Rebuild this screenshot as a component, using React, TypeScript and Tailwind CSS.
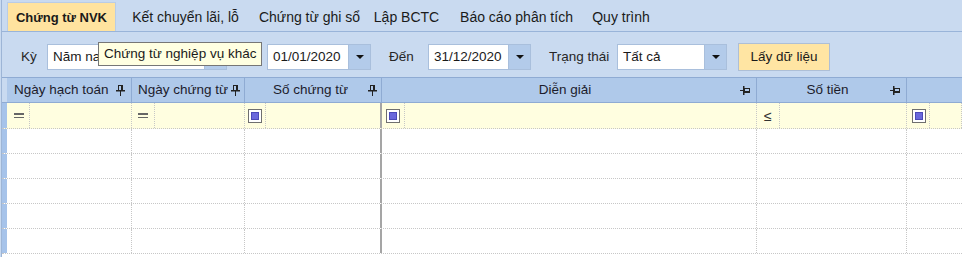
import React from 'react';

const tabs = [
  { label: 'Chứng từ NVK', w: 'w-[109px]', active: true },
  { label: 'Kết chuyển lãi, lỗ', w: 'w-[139px]' },
  { label: 'Chứng từ ghi sổ', w: 'w-[109px]' },
  { label: 'Lập BCTC', w: 'w-[85px]' },
  { label: 'Báo cáo phân tích', w: 'w-[135px]' },
  { label: 'Quy trình', w: 'w-[74px]' },
];

const cols = 'grid grid-cols-[5px_125px_113px_137px_375px_150px_1fr]';

function PinDown() {
  return (
    <svg width="9" height="11" viewBox="0 0 9 11" className="shrink-0">
      <rect x="2.5" y="0.5" width="4" height="5" fill="none" stroke="#222" />
      <rect x="5" y="0" width="2" height="6" fill="#222" />
      <rect x="0" y="5" width="9" height="1.5" fill="#222" />
      <rect x="4" y="6" width="1" height="5" fill="#222" />
    </svg>
  );
}

function PinSide() {
  return (
    <svg width="11" height="9" viewBox="0 0 11 9" className="shrink-0">
      <rect x="0" y="4" width="3" height="1" fill="#222" />
      <rect x="3" y="0" width="1.5" height="9" fill="#222" />
      <rect x="4.5" y="2.5" width="5" height="4" fill="none" stroke="#222" />
      <rect x="4" y="5" width="6" height="2" fill="#222" />
    </svg>
  );
}

function Drop({ w, text }: { w: string; text: string }) {
  return (
    <div className={`${w} h-[26px] flex border border-[#a9bfdc] bg-white`}>
      <div className="flex-1 flex items-center pl-[5px] text-[13.5px] text-[#1a1a1a] overflow-hidden whitespace-nowrap">
        {text}
      </div>
      <div className="w-[22px] bg-[#b3cbea] border-l border-[#a9bfdc] flex items-center justify-center">
        <svg width="8" height="4" viewBox="0 0 8 4">
          <path d="M0 0h8L4 4z" fill="#111" />
        </svg>
      </div>
    </div>
  );
}

function CheckIcon() {
  return (
    <div className="w-[14px] h-[14px] border border-[#6f6f6f] bg-white p-[2px]">
      <div className="w-full h-full bg-[#6a68dc] border border-[#4b49b8]" />
    </div>
  );
}

function EqIcon() {
  return (
    <div className="w-[10px] flex flex-col gap-[2px]">
      <div className="h-[1.5px] bg-[#666]" />
      <div className="h-[1.5px] bg-[#666]" />
    </div>
  );
}

function FilterCell({ icon, left = 'pl-[6px]' }: { icon: React.ReactNode; left?: string }) {
  return (
    <div className="flex h-full border-r border-dotted border-[#c7c7c7]">
      <div className={`w-[23px] ${left} flex items-center border-r border-dotted border-[#c7c7c7]`}>{icon}</div>
      <div className="flex-1" />
    </div>
  );
}

export default function App() {
  const rows = [0, 1, 2, 3, 4];
  return (
    <div className="w-[962px] h-[257px] overflow-hidden bg-[#c9daf0] font-['Liberation_Sans',Arial,sans-serif] text-[13.5px] text-[#1a1a1a] relative">
      <div className="ml-[1px] h-full border-l border-[#9db5d6] flex flex-col">
        {/* tab strip */}
        <div className="h-[32px] shrink-0 flex items-end border-b border-[#99b4d9] pl-[5px] text-[14px]">
          {tabs.map((t) => (
            <div
              key={t.label}
              className={`${t.w} h-[29px] pt-[1px] flex items-center justify-center whitespace-nowrap ${
                t.active ? 'bg-[#ffe39f] font-bold text-[13px] border-l border-t border-r border-[#b9cce6]' : ''
              }`}
            >
              {t.label}
            </div>
          ))}
        </div>

        {/* filter bar */}
        <div className="h-[28px] mt-[11px] shrink-0 flex items-center pl-[19px] text-[#262626]">
          <div className="w-[26px]">Kỳ</div>
          <Drop w="w-[180px]" text="Năm nay" />
          <div className="ml-[40px]">
            <Drop w="w-[104px]" text="01/01/2020" />
          </div>
          <div className="ml-[18px] w-[39px]">Đến</div>
          <Drop w="w-[103px]" text="31/12/2020" />
          <div className="ml-[18px] w-[68px] whitespace-nowrap">Trạng thái</div>
          <Drop w="w-[110px]" text="Tất cả" />
          <button className="ml-[11px] w-[92px] h-[28px] bg-[#ffe5a3] border border-[#aebfd6] text-[13.5px] text-[#1a1a1a]">
            Lấy dữ liệu
          </button>
        </div>

        {/* grid */}
        <div className="mt-[6px] flex-1 border-t border-[#8fabd3] bg-white">
          <div className={`${cols} h-[25px] bg-[#afc9ea] border-b border-[#8fabd3] text-[#1c1c2c]`}>
            <div className="bg-[#c9daf0]" />
            <div className="flex items-center justify-between pl-[7px] pr-[6px] border-r border-[#8fabd3]">
              <span>Ngày hạch toán</span>
              <PinDown />
            </div>
            <div className="flex items-center justify-between pl-[6px] pr-[4px] border-r border-[#8fabd3]">
              <span>Ngày chứng từ</span>
              <PinDown />
            </div>
            <div className="flex items-center pl-[8px] pr-[4px] border-r border-[#8fabd3]">
              <span className="flex-1 text-center">Số chứng từ</span>
              <PinDown />
            </div>
            <div className="flex items-center pl-[8px] pr-[5px] border-r border-[#8fabd3]">
              <span className="flex-1 text-center">Diễn giải</span>
              <PinSide />
            </div>
            <div className="flex items-center pl-[8px] pr-[5px] border-r border-[#8fabd3]">
              <span className="flex-1 text-center">Số tiền</span>
              <PinSide />
            </div>
            <div />
          </div>

          <div className={`${cols} h-[26px] bg-[#fffee0] border-b border-dotted border-[#c7c7c7]`}>
            <div className="bg-[#a6c3ea]" />
            <FilterCell icon={<EqIcon />} left="pl-[7px]" />
            <FilterCell icon={<EqIcon />} />
            <div className="flex h-full border-r-2 border-[#a5a5a5]">
              <div className="w-[21px] pl-[3px] flex items-center border-r border-dotted border-[#c7c7c7]">
                <CheckIcon />
              </div>
            </div>
            <FilterCell icon={<CheckIcon />} left="pl-[4px]" />
            <FilterCell icon={<span className="text-[#333] text-[14px] leading-none">≤</span>} left="pl-[7px]" />
            <FilterCell icon={<CheckIcon />} left="pl-[5px]" />
          </div>

          {rows.map((r) => (
            <div key={r} className={`${cols} h-[25px] border-b border-dotted border-[#c7c7c7]`}>
              <div className="bg-[#a6c3ea]" />
              <div className="border-r border-dotted border-[#c7c7c7]" />
              <div className="border-r border-dotted border-[#c7c7c7]" />
              <div className="border-r-2 border-[#a5a5a5]" />
              <div className="border-r border-dotted border-[#c7c7c7]" />
              <div className="border-r border-dotted border-[#c7c7c7]" />
              <div />
            </div>
          ))}
        </div>
      </div>

      {/* tooltip */}
      <div className="absolute left-[98px] top-[42px] h-[24px] px-[5px] flex items-center bg-[#ffffe1] border border-[#767676] whitespace-nowrap text-[13.5px] text-[#1a1a1a]">
        Chứng từ nghiệp vụ khác
      </div>
    </div>
  );
}
